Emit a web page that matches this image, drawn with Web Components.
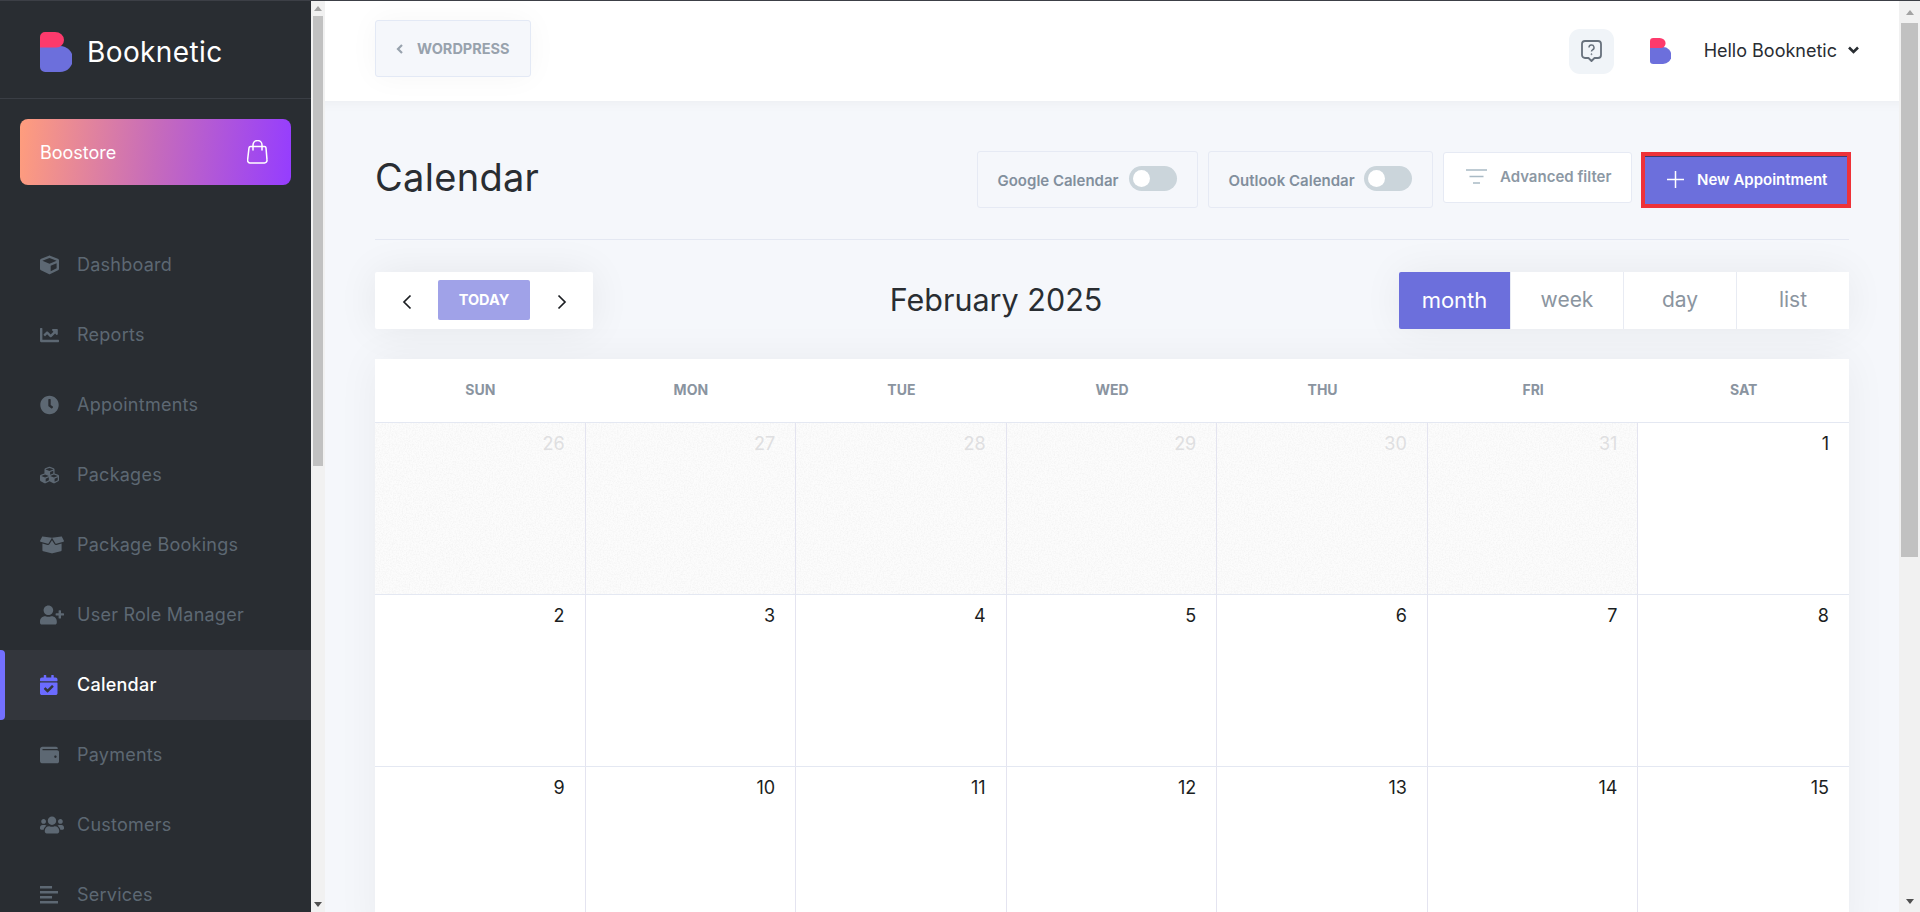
<!DOCTYPE html>
<html>
<head>
<meta charset="utf-8">
<title>Booknetic Calendar</title>
<style>
  html, body { margin: 0; height: 100%; overflow: hidden; }
  body { display: flex; flex-direction: column; background: #f5f7fb; font-family: Inter, sans-serif; }
  bk-app { flex: 1; min-height: 0; }
</style>
</head>
<body>
<bk-app></bk-app>

<script>
const POP = 'Inter, "Noto Sans", sans-serif';

const ICONS = {
  cube: ['0 0 512 512', 'M239.1 6.3l-208 78c-18.7 7-31.1 25-31.1 45v225.1c0 18.2 10.3 34.8 26.5 42.9l208 104c13.5 6.8 29.4 6.8 42.9 0l208-104c16.3-8.1 26.5-24.8 26.5-42.9V129.3c0-20-12.4-37.9-31.1-44.9l-208-78C262 2.2 250 2.2 239.1 6.3zM256 68.4l192 72v1.1l-192 78-192-78v-1.1l192-72zm32 356V275.5l160-65v133.9l-160 80z'],
  chart: ['0 0 512 512', 'M496 384H64V80c0-8.84-7.16-16-16-16H16C7.16 64 0 71.16 0 80v336c0 17.67 14.33 32 32 32h464c8.84 0 16-7.16 16-16v-32c0-8.84-7.16-16-16-16zM464 96H345.94c-21.38 0-32.09 25.85-16.97 40.97l32.4 32.4L288 242.75l-73.37-73.37c-12.5-12.5-32.76-12.5-45.25 0l-68.69 68.69c-6.25 6.25-6.25 16.38 0 22.63l22.62 22.62c6.25 6.25 16.38 6.25 22.63 0L192 237.25l73.37 73.37c12.5 12.5 32.76 12.5 45.25 0l96-96 32.4 32.4c15.12 15.12 40.97 4.41 40.97-16.97V112c.01-8.84-7.15-16-15.99-16z'],
  clock: ['0 0 512 512', 'M256,8C119,8,8,119,8,256S119,504,256,504,504,393,504,256,393,8,256,8Zm92.49,313h0l-20,25a16,16,0,0,1-22.49,2.5h0l-67-49.72a40,40,0,0,1-15-31.23V112a16,16,0,0,1,16-16h32a16,16,0,0,1,16,16V256l58,42.5A16,16,0,0,1,348.49,321Z'],
  cubes: ['0 0 512 512', 'M488.6 250.2L392 214V105.5c0-15-9.3-28.4-23.4-33.7l-100-37.5c-8.1-3.1-17.1-3.1-25.3 0l-100 37.5c-14.1 5.3-23.4 18.7-23.4 33.7V214l-96.6 36.2C9.3 255.5 0 268.9 0 283.9V394c0 13.6 7.7 26.1 19.9 32.2l100 50c10.1 5.1 22.1 5.1 32.2 0l103.9-52 103.9 52c10.1 5.1 22.1 5.1 32.2 0l100-50c12.2-6.1 19.9-18.6 19.9-32.2V283.9c0-15-9.3-28.4-23.4-33.7zM358 214.8l-85 31.9v-68.2l85-37v73.3zM154 104.1l102-38.2 102 38.2v.6l-102 41.4-102-41.4v-.6zm84 291.1l-85 42.5v-79.1l85-38.8v75.4zm0-112l-102 41.4-102-41.4v-.6l102-38.2 102 38.2v.6zm240 112l-85 42.5v-79.1l85-38.8v75.4zm0-112l-102 41.4-102-41.4v-.6l102-38.2 102 38.2v.6z'],
  box: ['0 0 640 512', 'M425.7 256c-16.9 0-32.8-9-41.4-23.4L320 126l-64.2 106.6c-8.7 14.5-24.6 23.5-41.5 23.5-4.5 0-9-.6-13.3-1.9L64 215v178c0 14.7 10 27.5 24.2 31l216.2 54.1c10.2 2.5 20.9 2.5 31 0L551.8 424c14.2-3.6 24.2-16.4 24.2-31V215l-137 39.1c-4.3 1.3-8.8 1.9-13.3 1.9zm212.6-112.2L586.8 41c-3.1-6.2-9.8-9.8-16.7-8.9L320 64l91.7 152.1c3.8 6.3 11.4 9.3 18.5 7.3l197.9-56.5c9.9-2.9 14.7-13.9 10.2-23.1zM53.2 41L1.7 143.8c-4.6 9.2.3 20.2 10.1 23l197.9 56.5c7.1 2 14.7-1 18.5-7.3L320 64 69.8 32.1c-6.9-.8-13.5 2.7-16.6 8.9z'],
  userplus: ['0 0 640 512', 'M624 208h-64v-64c0-8.8-7.2-16-16-16h-32c-8.8 0-16 7.2-16 16v64h-64c-8.8 0-16 7.2-16 16v32c0 8.8 7.2 16 16 16h64v64c0 8.8 7.2 16 16 16h32c8.8 0 16-7.2 16-16v-64h64c8.8 0 16-7.2 16-16v-32c0-8.8-7.2-16-16-16zm-400 48c70.7 0 128-57.3 128-128S294.7 0 224 0 96 57.3 96 128s57.3 128 128 128zm89.6 32h-16.7c-22.2 10.2-46.9 16-72.9 16s-50.6-5.8-72.9-16h-16.7C60.2 288 0 348.2 0 422.4V464c0 26.5 21.5 48 48 48h352c26.5 0 48-21.5 48-48v-41.6c0-74.2-60.2-134.4-134.4-134.4z'],
  calcheck: ['0 0 448 512', 'M436 160H12c-6.627 0-12-5.373-12-12v-36c0-26.51 21.49-48 48-48h48V12c0-6.627 5.373-12 12-12h40c6.627 0 12 5.373 12 12v52h128V12c0-6.627 5.373-12 12-12h40c6.627 0 12 5.373 12 12v52h48c26.51 0 48 21.49 48 48v36c0 6.627-5.373 12-12 12zM12 192h424c6.627 0 12 5.373 12 12v260c0 26.51-21.49 48-48 48H48c-26.51 0-48-21.49-48-48V204c0-6.627 5.373-12 12-12zm333.296 95.947l-28.169-28.398c-4.667-4.705-12.265-4.736-16.97-.068L194.122 364.665l-45.951-46.325c-4.667-4.705-12.265-4.736-16.97-.068l-28.398 28.17c-4.705 4.667-4.736 12.265-.068 16.97l82.601 83.269c4.667 4.705 12.265 4.736 16.97.068l142.92-141.833c4.705-4.667 4.736-12.265.068-16.97z'],
  wallet: ['0 0 512 512', 'M461.2 128H80c-8.84 0-16-7.16-16-16s7.16-16 16-16h384c8.84 0 16-7.16 16-16 0-26.51-21.49-48-48-48H64C28.65 32 0 60.65 0 96v320c0 35.35 28.65 64 64 64h397.2c28.02 0 50.8-21.53 50.8-48V176c0-26.47-22.78-48-50.8-48zM416 336c-17.67 0-32-14.33-32-32s14.33-32 32-32 32 14.33 32 32-14.33 32-32 32z'],
  users: ['0 0 640 512', 'M96 224c35.3 0 64-28.7 64-64s-28.7-64-64-64-64 28.7-64 64 28.7 64 64 64zm448 0c35.3 0 64-28.7 64-64s-28.7-64-64-64-64 28.7-64 64 28.7 64 64 64zm32 32h-64c-17.6 0-33.5 7.1-45.1 18.6 40.3 22.1 68.9 62 75.1 109.4h66c17.7 0 32-14.3 32-32v-32c0-35.3-28.7-64-64-64zm-256 0c61.9 0 112-50.1 112-112S381.9 32 320 32 208 82.1 208 144s50.1 112 112 112zm76.8 32h-8.3c-20.8 10-43.9 16-68.5 16s-47.6-6-68.5-16h-8.3C179.6 288 128 339.6 128 403.2V432c0 26.5 21.5 48 48 48h288c26.5 0 48-21.5 48-48v-28.8c0-63.6-51.6-115.2-115.2-115.2zm-223.7-13.4C161.5 263.1 145.6 256 128 256H64c-35.3 0-64 28.7-64 64v32c0 17.7 14.3 32 32 32h65.9c6.3-47.4 34.9-87.3 75.2-109.4z'],
  lines: ['0 0 448 448', 'M0 0h300v60H0zM0 125h448v60H0zM0 250h300v60H0zM0 375h448v60H0z']
};

function icon(name, w, h, fill) {
  const [vb, d] = ICONS[name];
  return `<svg width="${w}" height="${h}" viewBox="${vb}" fill="${fill}" preserveAspectRatio="xMinYMid meet"><path d="${d}"/></svg>`;
}

class BkLogo extends HTMLElement {
  connectedCallback() {
    const h = this.getAttribute('size') || 40;
    this.attachShadow({ mode: 'open' }).innerHTML = `
      <style>:host { display: block; line-height: 0; }</style>
      <svg height="${h}" width="${h * 0.8}" viewBox="0 0 32 40">
        <path fill="#6c6fdc" d="M0 14h20a13 13 0 0 1 0 26H5a5 5 0 0 1-5-5z"/>
        <path fill="#fd3a6c" d="M0 5a5 5 0 0 1 5-5h10a9 8 0 0 1 9 8v0a7.500 7.500 0 0 1-7.500 7.500H0z"/>
      </svg>`;
  }
}
customElements.define('bk-logo', BkLogo);

// classic windows style scrollbar, the reference has two of them
class BkScrollbar extends HTMLElement {
  connectedCallback() {
    const thumb = this.getAttribute('thumb');
    const arrow = this.getAttribute('arrow') || 15;
    this.attachShadow({ mode: 'open' }).innerHTML = `
      <style>
        :host { display: flex; flex-direction: column; align-items: stretch; flex: none; background: #f1f1f1; box-sizing: border-box; padding: 0 2px; }
        .arrow { height: ${arrow}px; flex: none; display: flex; align-items: center; justify-content: center; }
        .up { border: 4px solid transparent; border-top: 0; border-bottom: 5px solid #a3a3a3; width: 0; height: 0; }
        .down { border: 4px solid transparent; border-bottom: 0; border-top: 5px solid #505050; width: 0; height: 0; }
        .track { flex: 1; min-height: 0; }
        .thumb { background: #c1c1c1; height: ${thumb}px; }
      </style>
      <div class="arrow"><div class="up"></div></div>
      <div class="track"><div class="thumb"></div></div>
      <div class="arrow"><div class="down"></div></div>`;
  }
}
customElements.define('bk-scrollbar', BkScrollbar);

class BkNavItem extends HTMLElement {
  connectedCallback() {
    const active = this.hasAttribute('active');
    const w = this.getAttribute('w') || 19;
    this.attachShadow({ mode: 'open' }).innerHTML = `
      <style>
        :host { display: flex; align-items: center; height: 70px; padding-left: 40px; flex: none; position: relative; color: #5d6873; font: 400 18px ${POP}; letter-spacing: .25px; }
        :host([active]) { background: #33363c; color: #fff; font-weight: 500; }
        :host([active])::before { content: ''; position: absolute; left: 0; top: 0; bottom: 0; width: 5px; background: #7470ff; border-radius: 0 4px 4px 0; }
        .ic { width: 37px; flex: none; display: flex; align-items: center; line-height: 0; }
        .t { margin-top: -2px; }
      </style>
      <span class="ic">${icon(this.getAttribute('icon'), w, 20, active ? '#6b6bff' : '#5d6873')}</span>
      <span class="t"><slot></slot></span>`;
  }
}
customElements.define('bk-nav-item', BkNavItem);

class BkSidebar extends HTMLElement {
  connectedCallback() {
    this.attachShadow({ mode: 'open' }).innerHTML = `
      <style>
        :host { display: flex; flex-direction: column; width: 311px; flex: none; background: #292d32; overflow: hidden; }
        .brand { height: 98px; box-sizing: border-box; flex: none; border-bottom: 1px solid #3a3e45; display: flex; align-items: center; padding: 5px 0 0 40px; gap: 15px; color: #fff; font: 400 28px Inter, sans-serif; letter-spacing: .4px; }
        .store { margin: 20px 20px 0; height: 66px; flex: none; border-radius: 8px; background: linear-gradient(95deg, #ff9d7d 0%, #c66bbb 50%, #953dff 100%); display: flex; align-items: center; justify-content: space-between; padding: 0 23px 0 20px; color: #fff; font: 400 18px ${POP}; }
        nav { display: flex; flex-direction: column; margin-top: 45px; }
      </style>
      <div class="brand"><bk-logo></bk-logo><span>Booknetic</span></div>
      <div class="store">
        <span>Boostore</span>
        <svg width="21" height="24" viewBox="0 0 21 24" fill="none" stroke="#fff" stroke-width="1.500" stroke-linecap="round" stroke-linejoin="round"><path d="M3.500 7h14a1.500 1.500 0 0 1 1.500 1.300l1 12a2.600 2.600 0 0 1-2.600 3H3a2.600 2.600 0 0 1-2.400-3l1.400-12A1.500 1.500 0 0 1 3.500 7z" transform="translate(0 -.4)"/><path d="M6 10V5a4.500 4.500 0 0 1 9 0v5"/></svg>
      </div>
      <nav>
        <bk-nav-item icon="cube">Dashboard</bk-nav-item>
        <bk-nav-item icon="chart">Reports</bk-nav-item>
        <bk-nav-item icon="clock">Appointments</bk-nav-item>
        <bk-nav-item icon="cubes">Packages</bk-nav-item>
        <bk-nav-item icon="box" w="24">Package Bookings</bk-nav-item>
        <bk-nav-item icon="userplus" w="24">User Role Manager</bk-nav-item>
        <bk-nav-item icon="calcheck" w="18" active>Calendar</bk-nav-item>
        <bk-nav-item icon="wallet">Payments</bk-nav-item>
        <bk-nav-item icon="users" w="24">Customers</bk-nav-item>
        <bk-nav-item icon="lines" w="18">Services</bk-nav-item>
      </nav>`;
  }
}
customElements.define('bk-sidebar', BkSidebar);

class BkTopbar extends HTMLElement {
  connectedCallback() {
    this.attachShadow({ mode: 'open' }).innerHTML = `
      <style>
        :host { display: flex; align-items: center; height: 100px; flex: none; background: #fff; padding: 0 40px 0 50px; box-sizing: border-box; position: relative; }
        .wp { width: 156px; height: 57px; margin-top: -5px; box-sizing: border-box; border: 1px solid #e3e9f5; border-radius: 3px; background: #f5f7fb; box-shadow: 0 0 30px rgba(0,0,0,.04); display: flex; align-items: center; padding-left: 20px; gap: 13px; color: #98a2ad; font: 700 14.500px ${POP}; }
        .right { margin-left: auto; display: flex; align-items: center; }
        .help { width: 45px; height: 45px; border-radius: 11px; background: #f0f4f8; display: flex; align-items: center; justify-content: center; }
        bk-logo { margin: -1px 0 0 36px; }
        .hello { margin: -2px 0 0 33px; font: 400 18px ${POP}; color: #292d32; }
        .caret { margin: -2px 0 0 11px; line-height: 0; }
      </style>
      <div class="wp">
        <svg width="8" height="10" viewBox="0 0 8 10" fill="none" stroke="#98a2ad" stroke-width="2.200"><path d="M6 1L2 5l4 4"/></svg>
        <span>WORDPRESS</span>
      </div>
      <div class="right">
        <div class="help">
          <svg width="21" height="22" viewBox="0 0 21 22" fill="none" stroke="#67717c" stroke-width="1.800" stroke-linejoin="round"><path d="M4 1h13a3 3 0 0 1 3 3v11a3 3 0 0 1-3 3h-3.500l-3 3-3-3H4a3 3 0 0 1-3-3V4a3 3 0 0 1 3-3z"/><path d="M8 7.500a2.500 2.500 0 1 1 3.500 2.300c-.7.400-1 .8-1 1.700" stroke-width="1.500"/><circle cx="10.500" cy="14.200" r=".5" stroke-width="1"/></svg>
        </div>
        <bk-logo size="26"></bk-logo>
        <span class="hello">Hello Booknetic</span>
        <span class="caret"><svg width="11" height="8" viewBox="0 0 11 8" fill="none" stroke="#292d32" stroke-width="2.600"><path d="M1 1.500l4.500 4.500L10 1.500"/></svg></span>
      </div>`;
  }
}
customElements.define('bk-topbar', BkTopbar);

class BkToggleBox extends HTMLElement {
  connectedCallback() {
    this.attachShadow({ mode: 'open' }).innerHTML = `
      <style>
        :host { display: flex; align-items: center; justify-content: space-between; height: 57px; flex: none; box-sizing: border-box; border: 1px solid #e6eaf4; border-radius: 3px; padding: 0 20px 0 19.500px; color: #828f9d; font: 600 15px Inter, sans-serif; width: ${this.getAttribute('w')}px; }
        .t { padding-top: 2px; }
        .sw { width: 48px; height: 25px; margin-top: -3px; border-radius: 13px; background: #cbd5db; position: relative; flex: none; }
        .sw::after { content: ''; position: absolute; left: 4px; top: 4px; width: 17px; height: 17px; border-radius: 50%; background: #fff; }
      </style>
      <span class="t"><slot></slot></span><span class="sw"></span>`;
  }
}
customElements.define('bk-toggle-box', BkToggleBox);

class BkPageHead extends HTMLElement {
  connectedCallback() {
    this.attachShadow({ mode: 'open' }).innerHTML = `
      <style>
        :host { display: flex; align-items: flex-start; height: 88px; flex: none; border-bottom: 1px solid #e4e8f2; }
        h1 { margin: 0; padding-top: 3px; font: 400 38px/46px ${POP}; letter-spacing: .3px; color: #292d32; }
        .tools { margin-left: auto; display: flex; align-items: flex-start; gap: 10px; margin-right: -2px; }
        .filter { width: 189px; height: 51px; margin-top: 1px; box-sizing: border-box; background: #fff; border: 1px solid #e6eaf4; border-radius: 3px; display: flex; align-items: center; padding: 0 0 2px 22px; gap: 13px; color: #8c98a4; font: 600 15px Inter, sans-serif; }
        .new { width: 210px; height: 56px; margin: 1px 0 0 -1px; box-sizing: border-box; border: 4px solid #ee3238; background: #6c6fdc; color: #fff; display: flex; align-items: center; padding: 0 0 2px 22px; gap: 13px; font: 600 15px Inter, sans-serif; box-shadow: inset 0 1px 0 #3a3a70; }
      </style>
      <h1>Calendar</h1>
      <div class="tools">
        <bk-toggle-box w="221">Google Calendar</bk-toggle-box>
        <bk-toggle-box w="225">Outlook Calendar</bk-toggle-box>
        <div class="filter">
          <svg width="21" height="15" viewBox="0 0 21 15" fill="none" stroke="#a9bac5" stroke-width="1.700"><path d="M0 1h21M3.500 7.500h14M7 14h7"/></svg>
          <span>Advanced filter</span>
        </div>
        <div class="new">
          <svg width="17" height="17" viewBox="0 0 17 17" stroke="#fff" stroke-width="1.500"><path d="M8.500 0v17M0 8.500h17"/></svg>
          <span>New Appointment</span>
        </div>
      </div>`;
  }
}
customElements.define('bk-page-head', BkPageHead);

class BkCalToolbar extends HTMLElement {
  connectedCallback() {
    this.attachShadow({ mode: 'open' }).innerHTML = `
      <style>
        :host { display: flex; justify-content: space-between; align-items: center; height: 57px; margin-top: 32px; flex: none; }
        .nav { width: 218px; height: 57px; background: #fff; border-radius: 2px; box-shadow: 0 0 40px rgba(0,0,0,.07); display: flex; align-items: center; justify-content: space-between; padding: 0 26px 0 27px; box-sizing: border-box; }
        .today { width: 92px; height: 40px; border-radius: 2px; background: #a0a2e8; color: #fff; font: 700 14.500px ${POP}; display: flex; align-items: center; justify-content: center; margin: -2px 1px 0 0; }
        .nav svg { margin-top: 2px; }
        .title { font: 400 30.500px ${POP}; color: #292d32; margin-top: -2px; }
        .views { display: flex; width: 450px; height: 57px; box-shadow: 0 0 40px rgba(0,0,0,.06); border-radius: 2px; }
        .views span { flex: 1; display: flex; align-items: center; justify-content: center; padding-bottom: 2px; background: #fff; border-left: 1px solid #e8ebf3; color: #8b95a0; font: 400 21px ${POP}; box-sizing: border-box; }
        .views span.on { background: #6c6fdc; color: #fff; border-left: 0; border-radius: 2px 0 0 2px; flex: none; width: 111px; font-size: 22px; }
      </style>
      <div class="nav">
        <svg width="10" height="16" viewBox="0 0 10 16" fill="none" stroke="#1b1e22" stroke-width="1.700"><path d="M8.500 1.500L2 8l6.500 6.500"/></svg>
        <div class="today">TODAY</div>
        <svg width="10" height="16" viewBox="0 0 10 16" fill="none" stroke="#1b1e22" stroke-width="1.700"><path d="M1.500 1.500L8 8l-6.500 6.500"/></svg>
      </div>
      <div class="title">February 2025</div>
      <div class="views"><span class="on">month</span><span>week</span><span>day</span><span>list</span></div>`;
  }
}
customElements.define('bk-cal-toolbar', BkCalToolbar);

class BkCalendar extends HTMLElement {
  connectedCallback() {
    const days = ['SUN', 'MON', 'TUE', 'WED', 'THU', 'FRI', 'SAT'];
    const cells = [
      [26, 1], [27, 1], [28, 1], [29, 1], [30, 1], [31, 1], [1, 0],
      [2, 0], [3, 0], [4, 0], [5, 0], [6, 0], [7, 0], [8, 0],
      [9, 0], [10, 0], [11, 0], [12, 0], [13, 0], [14, 0], [15, 0]
    ];
    this.attachShadow({ mode: 'open' }).innerHTML = `
      <style>
        :host { display: block; margin-top: 30px; flex: none; background: #fff; box-shadow: 0 0 40px rgba(0,0,0,.05); }
        .grid { display: grid; grid-template-columns: repeat(7, 1fr); }
        .th { height: 64px; padding-bottom: 3px; box-sizing: border-box; display: flex; align-items: center; justify-content: center; color: #8a94a0; font: 700 14px ${POP}; border-bottom: 1px solid #e4e8f2; }
        .td { box-sizing: content-box; border-bottom: 1px solid #e4e8f2; border-right: 1px solid #e4e4f0; padding: 8px 20px 0 0; height: 163px; text-align: right; font: 400 18px/26px ${POP}; color: #1b1e22; position: relative; }
        .td:nth-child(7n) { border-right: 0; }
        .td.off { color: #dfdfe1; background: #fcfcfc; }
        .td.off svg { position: absolute; inset: 0; width: 100%; height: 100%; }
        .td span { position: relative; }
      </style>
      <svg width="0" height="0" style="position:absolute"><filter id="grain" x="0" y="0" width="100%" height="100%"><feTurbulence type="fractalNoise" baseFrequency=".7" numOctaves="3" seed="4"/><feColorMatrix values="0 0 0 0 .55  0 0 0 0 .55  0 0 0 0 .55  0 0 0 .3 -.11"/></filter></svg>
      <div class="grid">
        ${days.map(d => `<div class="th">${d}</div>`).join('')}
      </div>
      <div class="grid">
        ${cells.map(([n, off]) => `<div class="td${off ? ' off' : ''}">${off ? '<svg><rect width="100%" height="100%" filter="url(#grain)"/></svg>' : ''}<span>${n}</span></div>`).join('')}
      </div>`;
  }
}
customElements.define('bk-calendar', BkCalendar);

class BkApp extends HTMLElement {
  connectedCallback() {
    this.attachShadow({ mode: 'open' }).innerHTML = `
      <style>
        :host { display: flex; height: 100%; border-top: 1px solid #3c3f46; box-sizing: border-box; overflow: hidden; }
        main { flex: 1; min-width: 0; display: flex; flex-direction: column; overflow: hidden; background: #f5f7fb; }
        .content { padding: 50px 50px 0; display: flex; flex-direction: column; flex: 1; min-height: 0; box-shadow: inset 0 12px 14px -12px rgba(0,0,0,.05); }
      </style>
      <bk-sidebar></bk-sidebar>
      <bk-scrollbar thumb="450" style="width:14px"></bk-scrollbar>
      <main>
        <bk-topbar></bk-topbar>
        <div class="content">
          <bk-page-head></bk-page-head>
          <bk-cal-toolbar></bk-cal-toolbar>
          <bk-calendar></bk-calendar>
        </div>
      </main>
      <bk-scrollbar thumb="534" arrow="22" style="width:21px"></bk-scrollbar>`;
  }
}
customElements.define('bk-app', BkApp);
</script>
</body>
</html>
